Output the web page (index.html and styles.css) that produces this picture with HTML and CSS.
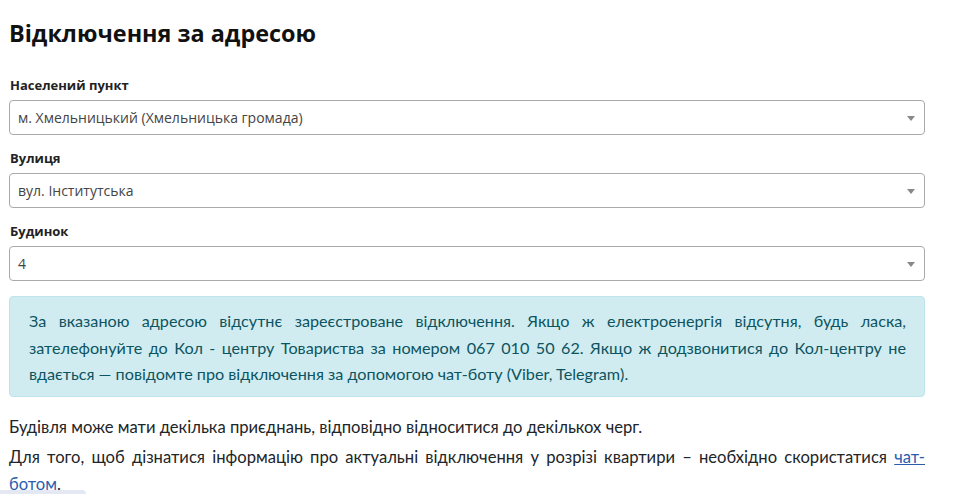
FILE: index.html
```html
<!doctype html>
<html lang="uk">
<head>
    <title>Відключення за адресою</title>
    <meta charset="utf-8" name="viewport" content="width=device-width,initial-scale=1">
    <link rel="stylesheet" href="styles.css">
</head>
<body>
    <div class="page">
        <h1 class="title">Відключення за адресою</h1>

        <div class="field">
            <label class="field_label" for="city">Населений пункт</label>
            <div class="select_box" id="city">
                <span>м. Хмельницький (Хмельницька громада)</span>
                <span class="arrow"></span>
            </div>
        </div>

        <div class="field">
            <label class="field_label" for="street">Вулиця</label>
            <div class="select_box" id="street">
                <span>вул. Інститутська</span>
                <span class="arrow"></span>
            </div>
        </div>

        <div class="field">
            <label class="field_label" for="house">Будинок</label>
            <div class="select_box" id="house">
                <span>4</span>
                <span class="arrow"></span>
            </div>
        </div>

        <div class="alert_info">
            За вказаною адресою відсутнє зареєстроване відключення. Якщо ж електроенергія відсутня, будь ласка, зателефонуйте до Кол - центру Товариства за номером 067 010 50 62. Якщо ж додзвонитися до Кол-центру не вдається — повідомте про відключення за допомогою чат-боту (Viber, Telegram).
        </div>

        <p class="text">Будівля може мати декілька приєднань, відповідно відноситися до декількох черг.</p>
        <p class="text">Для того, щоб дізнатися інформацію про актуальні відключення у розрізі квартири – необхідно скористатися <a href="#">чат-ботом</a>.</p>
    </div>
    <div class="corner_tab"></div>
</body>
</html>
```

FILE: styles.css
```css
body{
    margin: 0;
    background-color: #ffffff;
    color: #212529;
    font-family: "Open Sans", "Noto Sans", sans-serif;
}
.page{
    width: 916px;
    padding: 0 29px 0 9px;
}
.title{
    margin: 0;
    padding-top: 18px;
    margin-bottom: 28px;
    font-size: 23.4px;
    font-weight: 700;
    line-height: 30px;
    color: #111111;
}
.field{
    margin-bottom: 14px;
}
.field_label{
    display: block;
    margin-left: 1px;
    margin-bottom: 6px;
    font-size: 13px;
    font-weight: 700;
    line-height: 18px;
    color: #222222;
}
.select_box{
    display: flex;
    align-items: center;
    justify-content: space-between;
    height: 33px;
    padding: 0 9px 0 8px;
    border: 1px solid #aaaaaa;
    border-radius: 4px;
    font-size: 14px;
    color: #444444;
}
.arrow{
    width: 0;
    height: 0;
    border-left: 4px solid transparent;
    border-right: 4px solid transparent;
    border-top: 5px solid #888888;
    margin-top: 2px;
}
.alert_info{
    margin-top: 15px;
    padding: 11px 18px 8px 19px;
    border: 1px solid #bee5eb;
    border-radius: 4px;
    background-color: #d1ecf1;
    color: #0c5460;
    font-family: "Lato", "Noto Sans", sans-serif;
    font-size: 16.2px;
    line-height: 26.5px;
    text-align: justify;
}
.text{
    margin: 0;
    margin-top: 17px;
    font-family: "Lato", "Noto Sans", sans-serif;
    font-size: 16.6px;
    line-height: 27px;
    color: #212529;
    text-align: justify;
}
.text + .text{
    margin-top: 3px;
}
.text a{
    color: #2a5db0;
}
.corner_tab{
    position: fixed;
    left: 0;
    bottom: 0;
    width: 86px;
    height: 4px;
    border-top-right-radius: 4px;
    background-color: #e3e8f2;
}
```
